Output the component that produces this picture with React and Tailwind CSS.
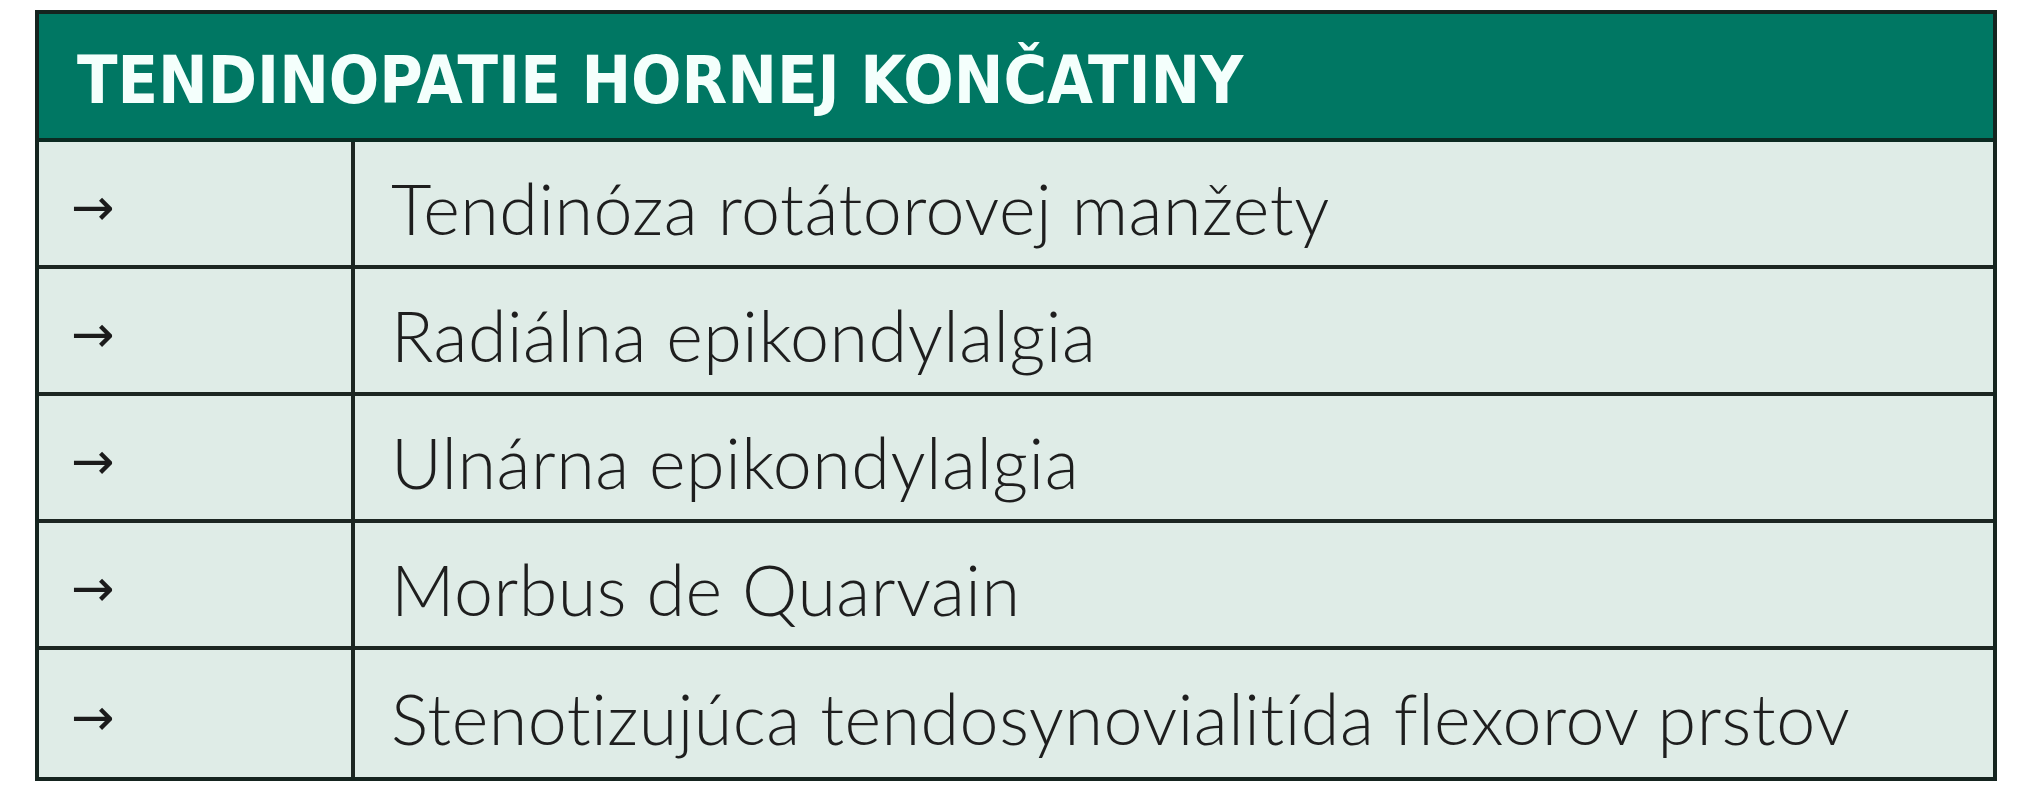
const rows = [
  "Tendinóza rotátorovej manžety",
  "Radiálna epikondylalgia",
  "Ulnárna epikondylalgia",
  "Morbus de Quarvain",
  "Stenotizujúca tendosynovialitída flexorov prstov",
];

export default function App() {
  return (
    <div className="w-[2037px] h-[800px] bg-white pl-[35px] pt-[10px] font-['Liberation_Sans',Arial,sans-serif]">
      <div className="w-[1962px] border-[4px] border-[#15241f] bg-[#dfece7]">
        <div className="h-[128px] bg-[#007763] border-b-[4px] border-[#0b2a22] flex items-center pl-[38px] pt-[10px]">
          <h1 className="font-['DejaVu_Sans_Condensed',sans-serif] text-[66px] font-bold text-[#f4fffc] leading-none">
            TENDINOPATIE HORNEJ KONČATINY
          </h1>
        </div>
        {rows.map((r, i) => (
          <div
            key={i}
            className={
              "grid grid-cols-[316px_1fr] h-[127px] " +
              (i < rows.length - 1 ? "border-b-[4px] border-[#1c2622]" : "")
            }
          >
            <div className="border-r-[4px] border-[#1c2622] flex items-center pl-[32px] pt-[6px] font-['DejaVu_Sans',sans-serif] text-[52px] text-[#1b1b1b] leading-none">
              →
            </div>
            <div className="flex items-center pl-[36px] pt-[8px] font-['Lato',sans-serif] font-light text-[70px] tracking-[0.5px] text-[#1e1e1e] leading-none">
              {r}
            </div>
          </div>
        ))}
      </div>
    </div>
  );
}
